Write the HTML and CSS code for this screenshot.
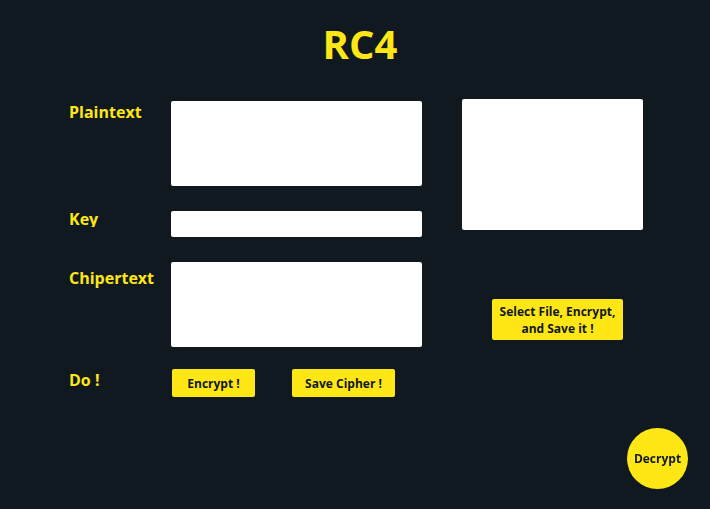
FILE: index.html
```html
<!DOCTYPE html>
<html lang="en">
<head>
<meta charset="utf-8">
<title>RC4</title>
<link rel="stylesheet" href="styles.css">
</head>
<body>
<h1 class="title">RC4</h1>
<main class="layout">
  <form class="fields">
    <label for="plaintext">Plaintext</label>
    <textarea id="plaintext" class="box"></textarea>
    <label for="key" class="key-label">Key</label>
    <input id="key" class="box" type="text">
    <label for="cipher" class="cipher-label">Chipertext</label>
    <textarea id="cipher" class="box"></textarea>
    <span class="do-label">Do !</span>
    <div class="actions">
      <button type="button" class="btn">Encrypt !</button>
      <button type="button" class="btn btn-wide">Save Cipher !</button>
    </div>
  </form>
  <aside class="side">
    <textarea class="box preview" aria-label="File contents"></textarea>
    <button type="button" class="btn btn-file">Select File, Encrypt, and Save it !</button>
  </aside>
</main>
<button type="button" class="decrypt">Decrypt</button>
</body>
</html>
```

FILE: styles.css
```css
* { box-sizing: border-box; }
body {
  margin: 0;
  min-height: 100vh;
  padding: 16px 67px 0 69px;
  background: #101820;
  color: #fee715;
  font-family: "Open Sans", sans-serif;
  font-weight: 700;
}
.title { margin: 0 0 28px; padding-left: 8px; font-size: 40px; line-height: 55px; text-align: center; }
.layout { display: flex; gap: 40px; align-items: flex-start; }
.fields {
  flex: 1;
  display: grid;
  grid-template-columns: 102px 1fr;
  row-gap: 25px;
  padding-top: 2px;
  font-size: 16px;
  line-height: 22px;
}
.key-label { height: 19px; margin-top: -3px; overflow: hidden; }
.cipher-label { padding-top: 5px; }
.box { width: 100%; border: 0; border-radius: 2px; background: #fff; padding: 4px; display: block; resize: none; }
textarea.box { height: 85px; }
input.box { height: 26px; }
.do-label { margin-top: -3px; }
.actions { display: flex; gap: 37px; margin-top: -3px; padding-left: 1px; }
.btn, .decrypt {
  border: 0;
  background: #fee715;
  color: #101820;
  font: 700 12px/17px "Open Sans", sans-serif;
}
.btn { width: 83px; height: 28px; padding: 0; border-radius: 2px; }
.btn-wide { width: 103px; }
.side { width: 181px; display: flex; flex-direction: column; align-items: center; gap: 69px; }
textarea.preview { height: 131px; }
.btn-file { width: 131px; height: 41px; margin-left: 10px; }
.decrypt { position: fixed; right: 22px; bottom: 20px; width: 61px; height: 61px; padding: 0; border-radius: 50%; }
```
